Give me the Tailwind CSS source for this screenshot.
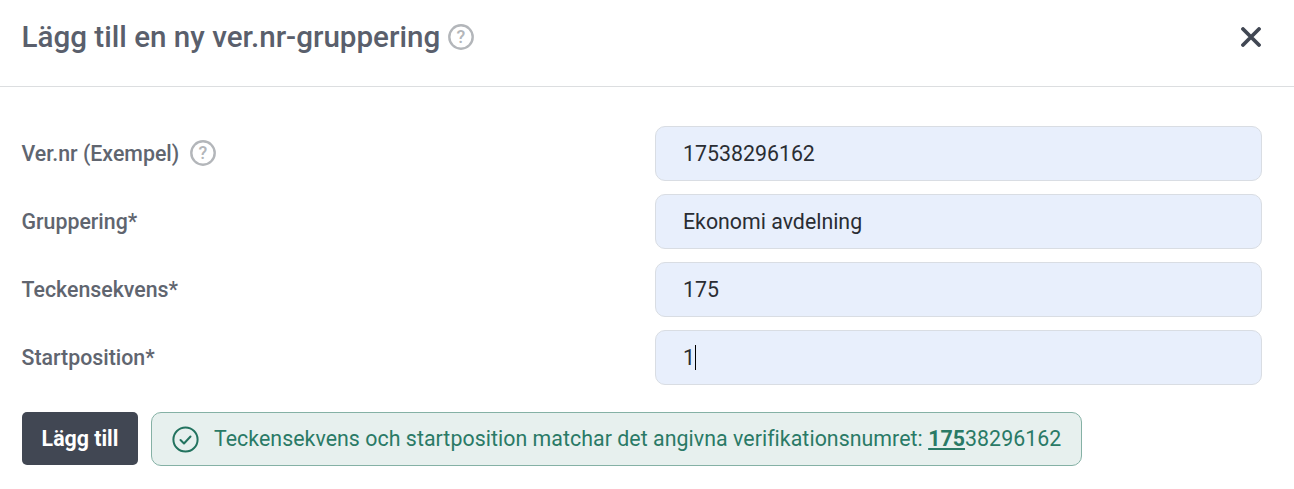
<!DOCTYPE html>
<html lang="sv">
<head>
<meta charset="UTF-8">
<title>Lägg till en ny ver.nr-gruppering</title>
<script src="https://cdn.jsdelivr.net/npm/@tailwindcss/browser@4"></script>
</head>
<body class="bg-white font-['Roboto',sans-serif] overflow-hidden">
<div class="w-[1294px] h-[489px]">

  <!-- header -->
  <header class="h-[87px] border-b border-[#dcdee0] pl-[21.5px] pr-[31px] flex items-center justify-between">
    <div class="flex items-center gap-2 pb-[12px]">
      <h1 class="text-[29.6px] leading-[36px] font-medium text-[#5a5f6c]">Lägg till en ny ver.nr-gruppering</h1>
      <svg class="w-[26px] h-[26px]" viewBox="0 0 26 26" fill="none">
        <circle cx="13" cy="13" r="11.7" stroke="#b3b6ba" stroke-width="2.4"/>
        <text x="13" y="19" text-anchor="middle" font-family="Roboto" font-size="18" font-weight="500" fill="#b3b6ba">?</text>
      </svg>
    </div>
    <button class="pb-[12px] pr-[2px]">
      <svg class="w-[20px] h-[20px] block" viewBox="0 0 20 20" fill="none">
        <path d="M2 2 18 18M18 2 2 18" stroke="#414753" stroke-width="3.8" stroke-linecap="round"/>
      </svg>
    </button>
  </header>

  <!-- form -->
  <div class="pt-[39px] pl-[21.5px] pr-[32px] flex flex-col gap-[13px]">
    <div class="flex items-center justify-between">
      <label class="flex items-center gap-[11px] text-[21.33px] font-medium text-[#60656f]">Ver.nr (Exempel)
        <svg class="w-[26px] h-[26px]" viewBox="0 0 26 26" fill="none">
          <circle cx="13" cy="13" r="11.7" stroke="#b3b6ba" stroke-width="2.4"/>
          <text x="13" y="19" text-anchor="middle" font-family="Roboto" font-size="18" font-weight="500" fill="#b3b6ba">?</text>
        </svg>
      </label>
      <div class="w-[607px] h-[55px] px-[27px] flex items-center bg-[#e8effc] border border-[#d9dde3] rounded-[10px] text-[21.33px] text-[#2a2d33]">17538296162</div>
    </div>
    <div class="flex items-center justify-between">
      <label class="text-[21.33px] font-medium text-[#60656f]">Gruppering*</label>
      <div class="w-[607px] h-[55px] px-[27px] flex items-center bg-[#e8effc] border border-[#d9dde3] rounded-[10px] text-[21.33px] text-[#2a2d33]">Ekonomi avdelning</div>
    </div>
    <div class="flex items-center justify-between">
      <label class="text-[21.33px] font-medium text-[#60656f]">Teckensekvens*</label>
      <div class="w-[607px] h-[55px] px-[27px] flex items-center bg-[#e8effc] border border-[#d9dde3] rounded-[10px] text-[21.33px] text-[#2a2d33]">175</div>
    </div>
    <div class="flex items-center justify-between">
      <label class="text-[21.33px] font-medium text-[#60656f]">Startposition*</label>
      <div class="w-[607px] h-[55px] px-[27px] flex items-center bg-[#e8effc] border border-[#d9dde3] rounded-[10px] text-[21.33px] text-[#2a2d33]">1<span class="w-px h-[25px] bg-black"></span></div>
    </div>
  </div>

  <!-- actions -->
  <div class="mt-[27px] pl-[22px] flex items-start gap-[13px]">
    <button class="w-[116px] h-[53px] bg-[#414753] rounded-[5px] text-white text-[21.33px] font-bold">Lägg till</button>
    <div class="w-[931px] h-[54px] pl-[20px] flex items-center gap-[15px] bg-[#e7f0ee] border border-[#85b1a5] rounded-[10px] text-[21.33px] tracking-[0.05px] text-[#2a7a66]">
      <svg class="w-[27px] h-[27px] shrink-0" viewBox="0 0 27 27" fill="none">
        <circle cx="13.5" cy="13.5" r="12.1" stroke="#23735f" stroke-width="2"/>
        <path d="M8.5 14l3.5 3.5 6.5-7" stroke="#23735f" stroke-width="2" stroke-linecap="round" stroke-linejoin="round"/>
      </svg>
      <p>Teckensekvens och startposition matchar det angivna verifikationsnumret: <b class="font-bold underline">175</b>38296162</p>
    </div>
  </div>
</div>
</body>
</html>
